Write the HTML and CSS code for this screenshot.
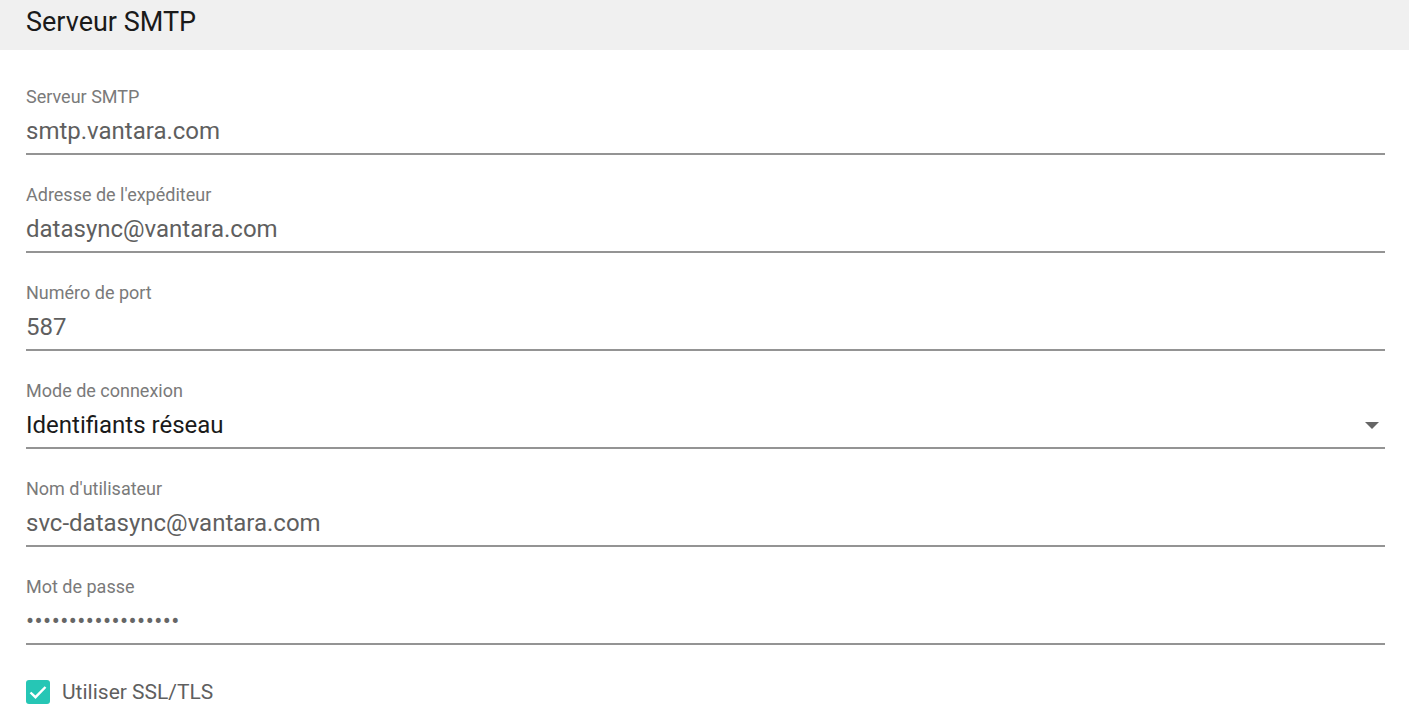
FILE: index.html
```html
<!DOCTYPE html>
<html lang="fr">
<head>
<meta charset="utf-8">
<title>Serveur SMTP</title>
<link rel="stylesheet" href="styles.css">
</head>
<body>
<div class="panel">
  <div class="panel-header">Serveur SMTP</div>
  <div class="form">
    <div class="field">
      <div class="label">Serveur SMTP</div>
      <div class="value">smtp.vantara.com</div>
    </div>
    <div class="field">
      <div class="label">Adresse de l'expéditeur</div>
      <div class="value">datasync@vantara.com</div>
    </div>
    <div class="field">
      <div class="label">Numéro de port</div>
      <div class="value">587</div>
    </div>
    <div class="field">
      <div class="label">Mode de connexion</div>
      <div class="value select">
        <span>Identifiants réseau</span>
        <span class="arrow"></span>
      </div>
    </div>
    <div class="field">
      <div class="label">Nom d'utilisateur</div>
      <div class="value">svc-datasync@vantara.com</div>
    </div>
    <div class="field">
      <div class="label">Mot de passe</div>
      <div class="value password">••••••••••••••••••</div>
    </div>
    <label class="check">
      <span class="box">
        <svg width="24" height="24" viewBox="0 0 24 24"><path d="M4.5 12.5 L9.5 17.2 L19.5 7" fill="none" stroke="#fff" stroke-width="2.4"/></svg>
      </span>
      <span class="check-label">Utiliser SSL/TLS</span>
    </label>
  </div>
</div>
</body>
</html>
```
FILE: styles.css
```css
* { box-sizing: border-box; }
html, body { margin: 0; padding: 0; background: #fff; }
body { font-family: Roboto, "Noto Sans", sans-serif; }
.panel-header {
  height: 50px;
  background: #f0f0f0;
  padding: 0 26px;
  font-size: 27px;
  line-height: 44px;
  color: #1a1a1a;
}
.form {
  padding: 37px 24px 0 26px;
  display: flex;
  flex-direction: column;
}
.field {
  border-bottom: 2px solid #949494;
  padding-bottom: 7px;
  margin-bottom: 30px;
}
.label {
  font-size: 18px;
  line-height: 20px;
  color: #7a7a7a;
}
.value {
  margin-top: 9px;
  font-size: 24px;
  line-height: 30px;
  height: 30px;
  color: #5f5f5f;
}
.value.select {
  color: #1a1a1a;
  display: flex;
  align-items: center;
  justify-content: space-between;
}
.arrow {
  width: 0; height: 0;
  border-left: 7px solid transparent;
  border-right: 7px solid transparent;
  border-top: 7px solid #666;
  margin-right: 6px;
}
.value.password {
  font-size: 24px;
  letter-spacing: 0.45px;
  color: #666;
}
.check {
  display: flex;
  align-items: center;
  gap: 12px;
  margin-top: 5px;
}
.box {
  width: 24px; height: 24px;
  border-radius: 3px;
  background: #26c6b5;
  display: flex;
  align-items: center;
  justify-content: center;
}
.check-label {
  font-size: 21px;
  color: #5f5f5f;
}
```
